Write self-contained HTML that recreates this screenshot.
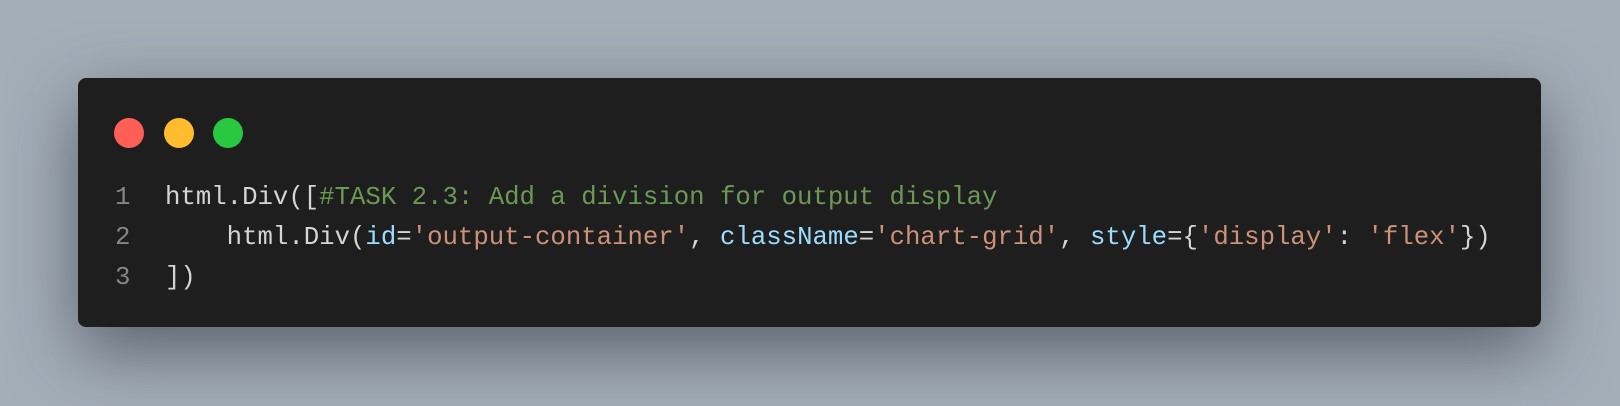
<!DOCTYPE html>
<html><head><style>
html,body{margin:0;padding:0;}
body{width:1620px;height:406px;overflow:hidden;background:#a4aeb9;position:relative;}
.card{position:absolute;left:78px;top:78px;width:1463px;height:249px;background:#1e1e1e;border-radius:8px;box-shadow:0 24px 70px rgba(40,45,55,0.6);}
.dot{position:absolute;top:118px;width:30px;height:30px;border-radius:50%;}
.code{position:absolute;left:0;top:178px;font-family:"Liberation Mono",monospace;font-size:25.7px;line-height:40px;color:#d4d4d4;white-space:pre;}
.ln{display:inline-block;width:165px;box-sizing:border-box;padding-left:115px;color:#858585;}
.c{color:#6a9955}.s{color:#ce9178}.p{color:#9cdcfe}
</style></head><body>
<div class="card"></div>
<div class="dot" style="left:114px;background:#ff5f57"></div>
<div class="dot" style="left:164px;background:#febc2e"></div>
<div class="dot" style="left:213px;background:#28c840"></div>
<div class="code"><div><span class="ln">1</span>html.Div([<span class="c">#TASK 2.3: Add a division for output display</span></div><div><span class="ln">2</span>    html.Div(<span class="p">id</span>=<span class="s">'output-container'</span>, <span class="p">className</span>=<span class="s">'chart-grid'</span>, <span class="p">style</span>={<span class="s">'display'</span>: <span class="s">'flex'</span>})</div><div><span class="ln">3</span>])</div></div>
</body></html>
